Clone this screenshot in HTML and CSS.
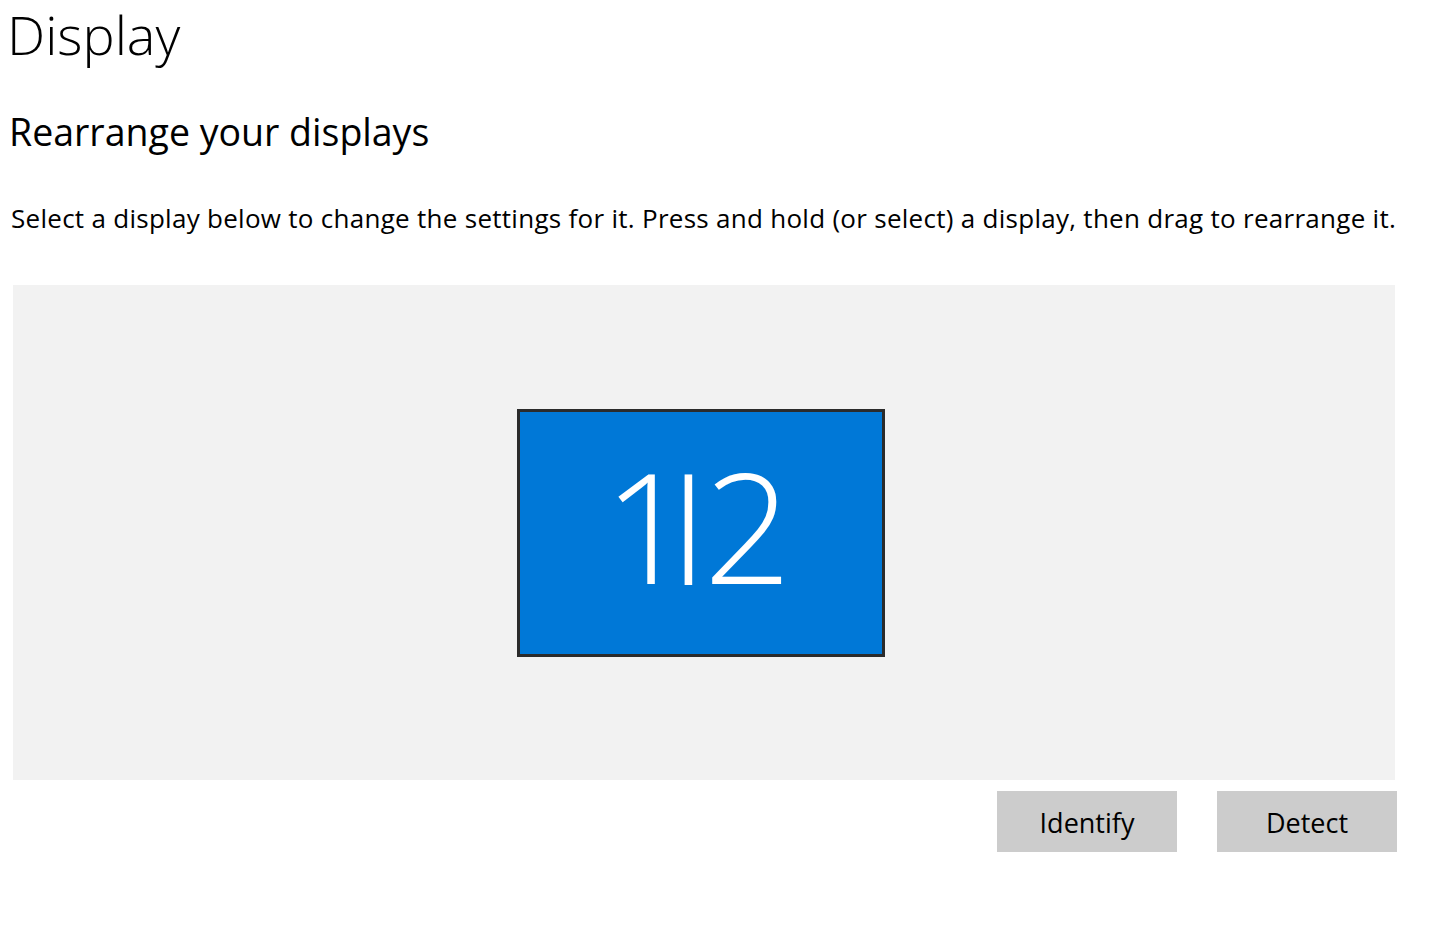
FILE: index.html
```html
<!DOCTYPE html>
<html lang="en">
<head>
<meta charset="utf-8">
<title>Display</title>
<link rel="stylesheet" href="styles.css">
</head>
<body>
<main class="page">
  <h1 class="title">Display</h1>
  <h2 class="subtitle">Rearrange your displays</h2>
  <p class="desc">Select a display below to change the settings for it. Press and hold (or select) a display, then drag to rearrange it.</p>
  <section class="canvas">
    <div class="monitor"><span class="monitor-label"><span class="num-first">1</span><span class="sep">|</span><span class="num-last">2</span></span></div>
  </section>
  <div class="actions">
    <button class="btn">Identify</button>
    <button class="btn">Detect</button>
  </div>
</main>
</body>
</html>
```

FILE: styles.css
```css
html, body {
  margin: 0;
  padding: 0;
  background: #ffffff;
}
body {
  font-family: "Open Sans", "Noto Sans", sans-serif;
  color: #000000;
}
.page {
  width: 1450px;
  height: 941px;
  display: flex;
  flex-direction: column;
}
.title {
  margin: 0;
  padding: 2px 0 0 7px;
  font-size: 54px;
  font-weight: 300;
  line-height: 64px;
}
.subtitle {
  margin: 0;
  padding: 42px 0 0 9px;
  font-size: 37.5px;
  font-weight: 400;
  line-height: 48px;
}
.desc {
  margin: 0;
  padding: 44px 0 0 11px;
  font-size: 26px;
  letter-spacing: 0.28px;
  line-height: 36px;
}
.canvas {
  margin: 49px 0 0 13px;
  width: 1382px;
  height: 495px;
  background: #f2f2f2;
  display: flex;
  align-items: center;
  justify-content: center;
}
.monitor {
  box-sizing: border-box;
  width: 368px;
  height: 248px;
  margin-left: -7px;
  background: #0078d7;
  border: 3px solid #2b2b2b;
  display: flex;
  align-items: center;
  justify-content: center;
}
.monitor-label {
  color: #ffffff;
  font-size: 154px;
  font-weight: 300;
  line-height: 1;
  margin-bottom: 18px;
  margin-right: 6px;
  white-space: nowrap;
}
.num-first {
  letter-spacing: -33px;
}
.sep {
  font-size: 110px;
  font-weight: 400;
  letter-spacing: -15px;
  vertical-align: 25px;
}
.actions {
  display: flex;
  gap: 40px;
  margin: 11px 0 0 997px;
}
.btn {
  box-sizing: border-box;
  width: 180px;
  height: 61px;
  border: none;
  background: #cccccc;
  font-family: "Open Sans", "Noto Sans", sans-serif;
  font-size: 27px;
  color: #000000;
  padding: 2px 0 0 0;
}
```
